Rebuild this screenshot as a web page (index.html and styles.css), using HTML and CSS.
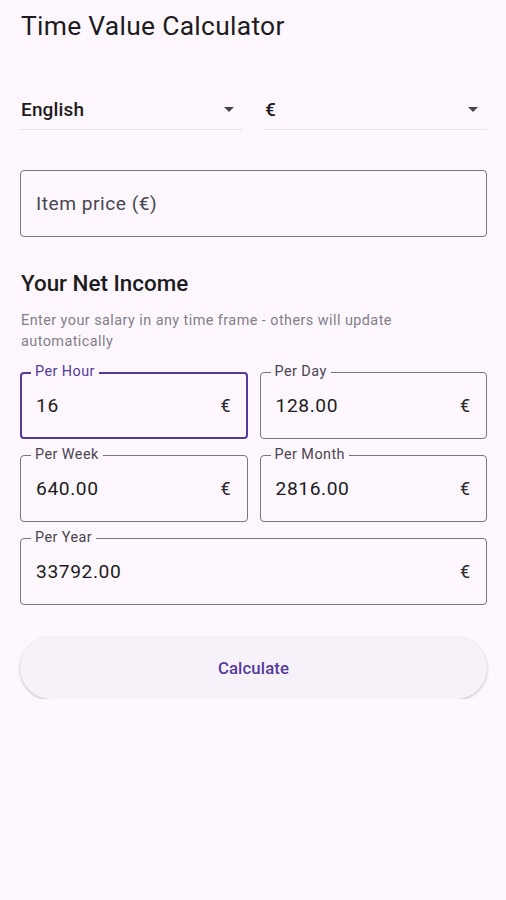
FILE: index.html
```html
<!DOCTYPE html>
<html lang="en">
<head>
    <meta charset="UTF-8">
    <meta name="viewport" content="width=device-width, initial-scale=1.0">
    <title>Time Value Calculator</title>
    <link rel="stylesheet" href="styles.css">
</head>
<body>

    <div class="screen">
        <h1 class="title">Time Value Calculator</h1>

        <div class="dropdowns">
            <div class="dropdown">
                <span class="dropdown-value">English</span>
                <span class="arrow"></span>
            </div>
            <div class="dropdown">
                <span class="dropdown-value">€</span>
                <span class="arrow"></span>
            </div>
        </div>

        <div class="price-field">
            <span class="placeholder">Item price (€)</span>
        </div>

        <h2 class="section-title">Your Net Income</h2>
        <p class="section-hint">Enter your salary in any time frame - others will update automatically</p>

        <div class="income-grid">
            <div class="field focused">
                <span class="field-label">Per Hour</span>
                <span class="field-value">16</span>
                <span class="suffix">€</span>
            </div>
            <div class="field">
                <span class="field-label">Per Day</span>
                <span class="field-value">128.00</span>
                <span class="suffix">€</span>
            </div>
            <div class="field">
                <span class="field-label">Per Week</span>
                <span class="field-value">640.00</span>
                <span class="suffix">€</span>
            </div>
            <div class="field">
                <span class="field-label">Per Month</span>
                <span class="field-value">2816.00</span>
                <span class="suffix">€</span>
            </div>
            <div class="field wide">
                <span class="field-label">Per Year</span>
                <span class="field-value">33792.00</span>
                <span class="suffix">€</span>
            </div>
        </div>

        <button class="calc-btn">Calculate</button>
    </div>

</body>
</html>
```

FILE: styles.css
```css
body {
    font-family: Roboto, "Liberation Sans", sans-serif;
    margin: 0;
    padding: 0;
    background-color: #fef7ff;
    color: #1d1b20;
}
.screen {
    padding: 10px 19px 0 20px;
}
.title {
    margin: 0 0 47px 1px;
    font-size: 26.4px;
    font-weight: 400;
    line-height: 33px;
    letter-spacing: 0.3px;
}

/* Выпадающие списки */
.dropdowns {
    display: flex;
    gap: 21px;
}
.dropdown {
    flex: 1;
    height: 39px;
    display: flex;
    align-items: center;
    justify-content: space-between;
    border-bottom: 1px solid #e7e1ea;
    padding: 0 9px 0 1px;
}
.dropdown-value {
    font-size: 19px;
    font-weight: 500;
    letter-spacing: 0.15px;
}
.arrow {
    width: 0;
    height: 0;
    border-left: 5px solid transparent;
    border-right: 5px solid transparent;
    border-top: 5px solid #49454f;
}

.price-field {
    margin-top: 40px;
    height: 65px;
    border: 1px solid #79747e;
    border-radius: 4px;
    display: flex;
    align-items: center;
    padding-left: 15px;
}
.placeholder {
    font-size: 19.2px;
    letter-spacing: 0.5px;
    color: #49454f;
}

.section-title {
    margin: 32px 0 0 1px;
    font-size: 22.4px;
    font-weight: 500;
    line-height: 28px;
}
.section-hint {
    margin: 13px 60px 0 1px;
    font-size: 14.4px;
    letter-spacing: 0.45px;
    line-height: 21px;
    color: #837e88;
}

/* Поля дохода */
.income-grid {
    margin-top: 20px;
    display: grid;
    grid-template-columns: 1fr 1fr;
    column-gap: 12px;
    row-gap: 16px;
}
.field {
    position: relative;
    height: 65px;
    border: 1px solid #79747e;
    border-radius: 4px;
    display: flex;
    align-items: center;
    justify-content: space-between;
    padding: 0 16px 0 15px;
}
.field.wide {
    grid-column: span 2;
}
.field.focused {
    border: 2px solid #553a9c;
    padding: 0 15px 0 14px;
    height: 63px;
}
.field-label {
    position: absolute;
    top: -10px;
    left: 10px;
    padding: 0 4px;
    font-size: 14.4px;
    letter-spacing: 0.45px;
    line-height: 18px;
    color: #49454f;
    background-color: #fef7ff;
}
.field.focused .field-label {
    top: -11px;
    left: 9px;
    color: #553a9c;
}
.field-value {
    font-size: 19.2px;
    letter-spacing: 0.6px;
}
.suffix {
    font-size: 18px;
    color: #2d2a31;
}

.calc-btn {
    display: block;
    width: 100%;
    height: 62px;
    margin-top: 32px;
    border: none;
    border-radius: 31px;
    background-color: #f7f2fa;
    box-shadow: 0 1px 3px rgba(0, 0, 0, 0.25);
    font-family: inherit;
    font-size: 16.8px;
    font-weight: 500;
    letter-spacing: 0.1px;
    color: #553a9c;
    cursor: pointer;
}
```
